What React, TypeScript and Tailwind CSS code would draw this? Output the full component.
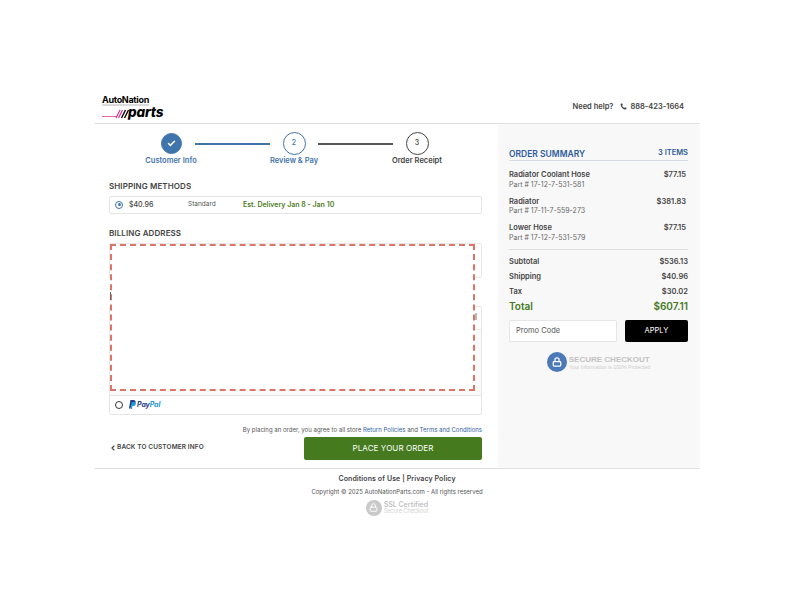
import { Check, ChevronLeft, Lock, Phone } from "lucide-react";

const items = [
  { name: "Radiator Coolant Hose", part: "Part # 17-12-7-531-581", price: "$77.15" },
  { name: "Radiator", part: "Part # 17-11-7-559-273", price: "$381.83" },
  { name: "Lower Hose", part: "Part # 17-12-7-531-579", price: "$77.15" },
];

const totals = [
  { label: "Subtotal", value: "$536.13" },
  { label: "Shipping", value: "$40.96" },
  { label: "Tax", value: "$30.02" },
];

function Logo() {
  return (
    <div className="relative h-[25px] w-[64px] font-['Inter',sans-serif] text-black">
      <div className="absolute left-0 top-[1px] text-[9px] font-bold leading-[9px] tracking-[-0.3px]">AutoNation</div>
      <svg className="absolute left-0 top-[10px]" width="48" height="15" viewBox="0 0 48 15">
        <path d="M0 12.5H15" stroke="#e0218a" strokeWidth="0.7" />
        <path d="M0 1H47" stroke="#999" strokeWidth="0.7" />
        <path d="M14 14L18 6M16.5 14L20.5 6" stroke="#e0218a" strokeWidth="1.1" />
        <path d="M19.5 14L23.5 6M22.5 14L26.5 6" stroke="#111" strokeWidth="1.5" />
      </svg>
      <div className="absolute left-[26px] top-[11px] text-[13.5px] font-extrabold italic leading-[14px] tracking-[-0.1px]">
        parts
      </div>
    </div>
  );
}

function Step({ label, state, n }: { label: string; state: "done" | "active" | "todo"; n: number }) {
  const ring =
    state === "done"
      ? "h-[21px] w-[21px] my-[1px] bg-[#3f74ad] border-[#3f74ad] text-white"
      : state === "active"
        ? "h-[23px] w-[23px] bg-white border-[#3f74ad] text-[#3f74ad]"
        : "h-[23px] w-[23px] bg-white border-[#444] text-[#444]";
  return (
    <div className="flex w-[100px] flex-col items-center">
      <div className={`flex items-center justify-center rounded-full border-[1.5px] text-[7px] font-medium ${ring}`}>
        {state === "done" ? <Check size={9} strokeWidth={4} /> : n}
      </div>
      <div className={`text-[7.5px] font-semibold leading-[11px] ${state === "todo" ? "text-[#444]" : "text-[#3f74ad]"}`}>
        {label}
      </div>
    </div>
  );
}

function PayPal() {
  return (
    <div className="flex items-center gap-[1px]">
      <svg width="7" height="9" viewBox="0 0 7 9">
        <path d="M1.4 0H4.4C6 0 7 1 6.6 2.6 6.2 4.2 5 5 3.4 5H2.2L1.6 8.5H0Z" fill="#253b80" />
        <path d="M2.6 2H5C6.4 2 7 3 6.7 4.2 6.4 5.4 5.4 6 4.2 6H3.4L3 9H1.8Z" fill="#179bd7" />
      </svg>
      <span className="text-[7px] font-bold italic leading-none tracking-[-0.1px]">
        <span className="text-[#253b80]">Pay</span>
        <span className="text-[#179bd7]">Pal</span>
      </span>
    </div>
  );
}

export default function App() {
  return (
    <div className="min-h-[612px] bg-white pt-[90px] font-['Inter',sans-serif] text-[#444]">
      <div className="ml-[94px] w-[606px]">
        <header className="flex h-[34px] items-center justify-between border-b border-[#e2e2e2] pl-[8px] pr-[16px]">
          <Logo />
          <div className="flex items-center text-[7.5px] font-semibold">
            <span>Need help?</span>
            <Phone size={7} fill="currentColor" strokeWidth={0} className="ml-[7px] mr-[3px]" />
            <span>888-423-1664</span>
          </div>
        </header>

        <div className="flex h-[344.5px] border-b border-[#e2e2e2]">
          <main className="w-[404px] pl-[15px] pr-[16px] pt-[8px]">
            <div className="ml-[12px] flex items-start">
              <Step label="Customer Info" state="done" n={1} />
              <div className="ml-[-26px] mr-[-26px] mt-[11px] h-[1.5px] w-[75px] bg-[#3f74ad]" />
              <Step label="Review & Pay" state="active" n={2} />
              <div className="ml-[-26px] mr-[-26px] mt-[11px] h-[1.5px] w-[75px] bg-[#555]" />
              <Step label="Order Receipt" state="todo" n={3} />
            </div>

            <h2 className="mt-[15px] text-[8px] font-semibold leading-[11px] tracking-[0.1px]">SHIPPING METHODS</h2>
            <div className="mt-[3.5px] flex h-[18px] items-center rounded-[2px] border border-[#e4e4e4] pl-[5px] text-[6.5px]">
              <span className="flex h-[8px] w-[8px] items-center justify-center rounded-full border border-[#3f74ad]">
                <span className="h-[3px] w-[3px] rounded-full bg-[#3f74ad]" />
              </span>
              <span className="ml-[6px] mt-[1px] w-[59px] text-[7px] font-medium">$40.96</span>
              <span className="mt-[1px] w-[55px] text-[#555]">Standard</span>
              <span className="mt-[1px] text-[7px] font-semibold text-[#4c7c23]">Est. Delivery Jan 8 - Jan 10</span>
            </div>

            <h2 className="mt-[14.5px] text-[8px] font-semibold leading-[11px] tracking-[0.1px]">BILLING ADDRESS</h2>
            <div className="relative mt-[3.5px]">
              <div className="h-[35px] rounded-[2px] border border-[#e8e8e8]" />
              <div className="mt-[28px] h-[23px] rounded-t-[2px] border border-b-0 border-[#e8e8e8]" />
              <div className="h-[66px] border-x border-t border-[#e8e8e8] bg-[#fafafa]" />
              <div className="flex h-[20.5px] items-center rounded-b-[2px] border border-[#e4e4e4] pl-[5px]">
                <span className="mr-[6px] h-[8px] w-[8px] rounded-full border-[1.5px] border-[#333]" />
                <PayPal />
              </div>
              <div className="absolute left-[1px] top-[1px] h-[147px] w-[365px] border-2 border-dashed border-[#dc7468] bg-white" />
              <div className="absolute left-[1px] top-[49px] h-[8px] w-px bg-[#666]" />
              <div className="absolute left-[366px] top-[70px] h-[7px] w-[2px] bg-[#bbb]" />
            </div>

            <p className="mt-[10.5px] text-right text-[6px] leading-[8px] tracking-[0.02px] text-[#555]">
              By placing an order, you agree to all store{" "}
              <span className="text-[#2f62a1]">Return Policies</span> and{" "}
              <span className="text-[#2f62a1]">Terms and Conditions</span>
            </p>
            <div className="mt-[3px] flex items-center justify-between">
              <div className="flex items-center text-[6.5px] font-semibold tracking-[0.1px]">
                <ChevronLeft size={8} strokeWidth={3.5} />
                <span>BACK TO CUSTOMER INFO</span>
              </div>
              <button className="h-[23px] w-[178px] rounded-[2px] bg-[#457a1e] text-[8px] font-normal tracking-[0.1px] text-white">
                PLACE YOUR ORDER
              </button>
            </div>
          </main>

          <aside className="w-[202px] bg-[#f8f8f8] pl-[11px] pr-[12px] pt-[24px]">
            <div className="flex items-end justify-between border-b border-[#d8dde5]">
              <span className="text-[8.5px] font-semibold leading-[11px] text-[#2d5a9e]">ORDER SUMMARY</span>
              <span className="pb-[3px] text-[7.5px] font-semibold leading-[9px] text-[#2d5a9e]">3 ITEMS</span>
            </div>
            <div className="mt-[8px] flex flex-col gap-[6px]">
              {items.map((item) => (
                <div key={item.part} className="flex justify-between pr-[2px]">
                  <div>
                    <div className="text-[7.5px] font-semibold leading-[11px]">{item.name}</div>
                    <div className="mt-[-0.5px] text-[7px] leading-[10px] text-[#666]">{item.part}</div>
                  </div>
                  <div className="text-[7.5px] font-semibold leading-[11px]">{item.price}</div>
                </div>
              ))}
            </div>
            <div className="mt-[6px] h-px bg-[#ddd]" />
            <div className="mt-[6px] flex flex-col gap-[4px]">
              {totals.map((row) => (
                <div key={row.label} className="flex justify-between text-[7.5px] font-semibold leading-[11px]">
                  <span>{row.label}</span>
                  <span>{row.value}</span>
                </div>
              ))}
            </div>
            <div className="mt-[2px] flex justify-between text-[10px] font-semibold leading-[14px] text-[#457a1e]">
              <span>Total</span>
              <span>$607.11</span>
            </div>
            <div className="mt-[7px] flex justify-between">
              <div className="flex h-[22px] w-[108px] items-center rounded-[2px] border border-[#e6e6e6] bg-white pl-[6px] pt-[1px] text-[7.5px] text-[#555]">
                Promo Code
              </div>
              <button className="h-[22px] w-[63px] rounded-[2px] bg-black pt-[1px] text-[7.5px] font-normal text-white">APPLY</button>
            </div>
            <div className="mt-[10.5px] flex items-center justify-center">
              <div className="flex h-[20px] w-[20px] items-center justify-center rounded-full bg-[#4a78b8]">
                <Lock size={10} strokeWidth={3} className="text-white" />
              </div>
              <div className="ml-[2px] pt-[1px] font-['Liberation_Sans',sans-serif]">
                <div className="text-[8px] font-bold leading-[9px] text-[#c2c2c2]">SECURE CHECKOUT</div>
                <div className="text-[5.2px] leading-[7px] text-[#cdcdcd]">Your Information is 100% Protected</div>
              </div>
            </div>
          </aside>
        </div>

        <footer className="flex flex-col items-center pt-[4.5px]">
          <div className="text-[7px] font-semibold leading-[11px] tracking-[0.1px]">Conditions of Use | Privacy Policy</div>
          <div className="mt-[2.5px] text-[6px] leading-[9px] text-[#555]">
            Copyright © 2025 AutoNationParts.com - All rights reserved
          </div>
          <div className="mt-[4px] flex items-center">
            <div className="flex h-[16px] w-[16px] items-center justify-center rounded-full bg-[#c9c9c9]">
              <Lock size={9} strokeWidth={2.5} className="text-white" />
            </div>
            <div className="ml-[2px] pt-[1px]">
              <div className="text-[7px] font-semibold leading-[7px] text-[#c2c2c2]">SSL Certified</div>
              <div className="text-[5.5px] leading-[7px] text-[#d2d2d2]">Secure Checkout</div>
            </div>
          </div>
        </footer>
      </div>
    </div>
  );
}
